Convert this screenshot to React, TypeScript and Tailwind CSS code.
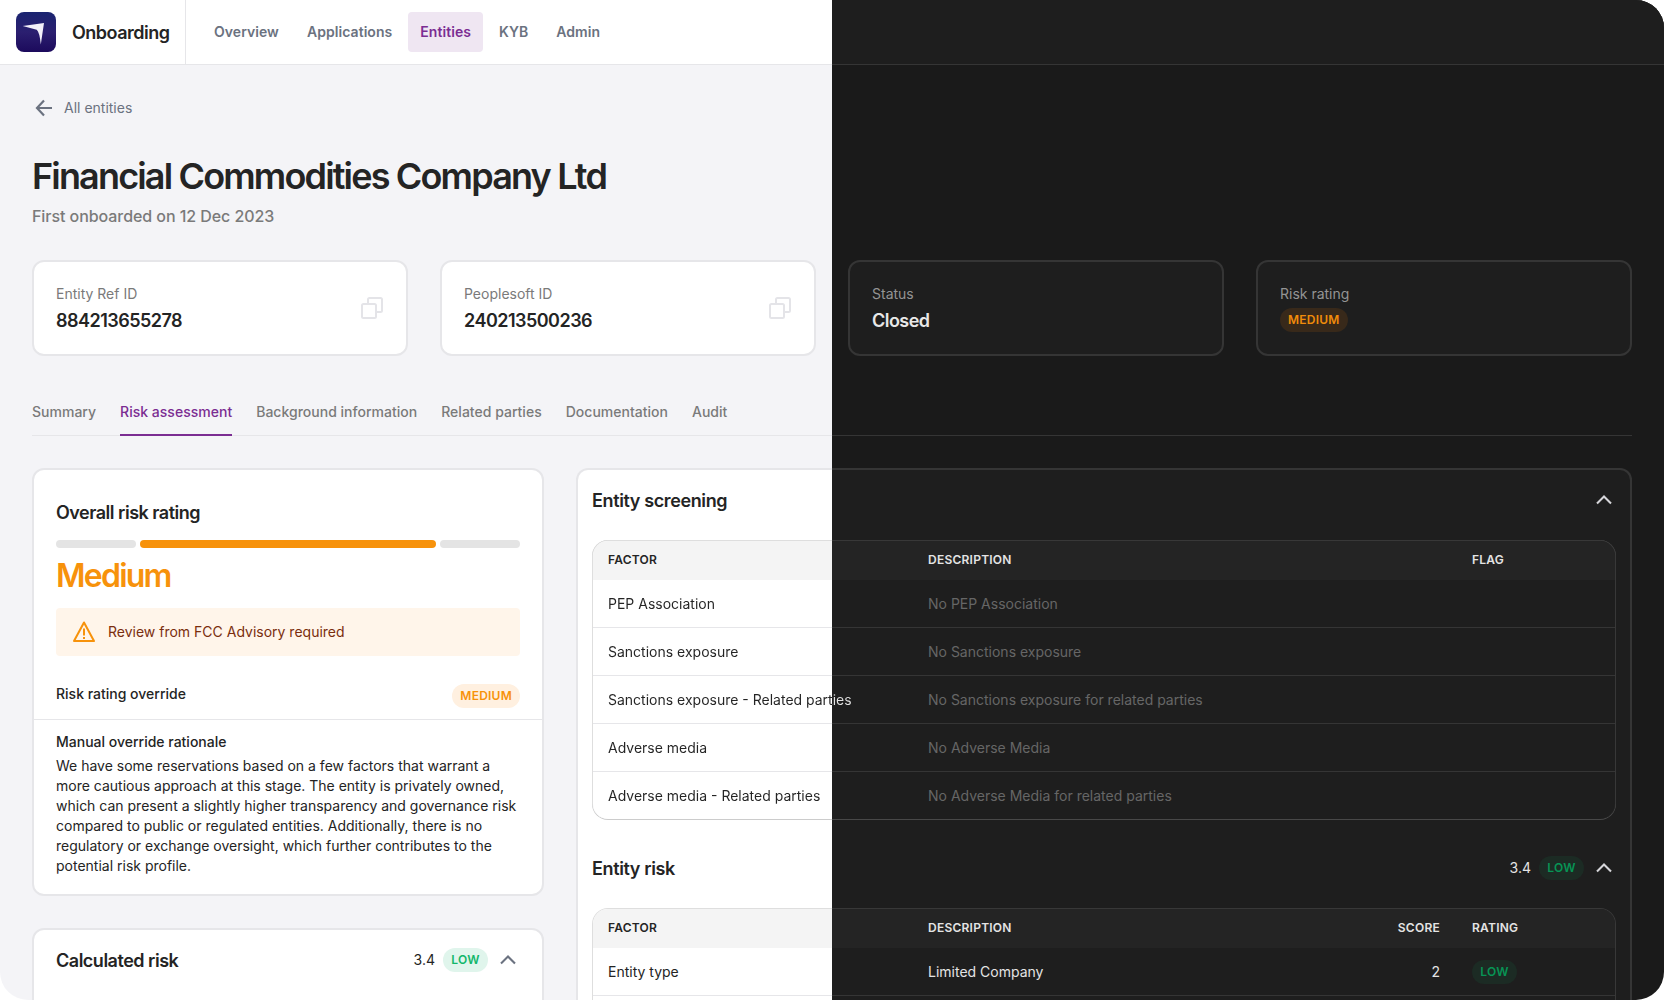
import React from 'react';
import { clsx } from 'clsx';

// The backdrop is fixed to the window, so every surface changes theme at the same x
const split = {
  page: 'bg-fixed bg-[linear-gradient(90deg,#f4f4f7_50%,#1a1a1a_50%)]',
  surface: 'bg-fixed bg-[linear-gradient(90deg,#ffffff_50%,#1e1e1e_50%)]',
  border: 'bg-fixed bg-[linear-gradient(90deg,#e6e6e9_50%,#353535_50%)]',
  tableBorder: 'bg-fixed bg-[linear-gradient(90deg,#dedede_50%,#383838_50%)]',
  tableEnd: 'bg-fixed bg-[linear-gradient(90deg,#cccccc_50%,#484848_50%)]',
  head: 'bg-fixed bg-[linear-gradient(90deg,#f4f4f4_50%,#242424_50%)]',
  text: 'bg-fixed bg-[linear-gradient(90deg,#242424_50%,#e4e4e4_50%)] bg-clip-text text-transparent',
};

const navItems = ['Overview', 'Applications', 'Entities', 'KYB', 'Admin'];
const tabs = ['Summary', 'Risk assessment', 'Background information', 'Related parties', 'Documentation', 'Audit'];

const screening = [
  { factor: 'PEP Association', desc: 'No PEP Association' },
  { factor: 'Sanctions exposure', desc: 'No Sanctions exposure' },
  { factor: 'Sanctions exposure - Related parties', desc: 'No Sanctions exposure for related parties' },
  { factor: 'Adverse media', desc: 'No Adverse Media' },
  { factor: 'Adverse media - Related parties', desc: 'No Adverse Media for related parties' },
];

const badgeTones = {
  medium: 'bg-[#fff0e0] text-[#f7920b]',
  mediumDark: 'bg-[#38291a] text-[#f08c0a]',
  low: 'bg-[#e0f5ec] text-[#12b76a]',
  lowDark: 'bg-[#1c2b24] text-[#079455]',
};

const Badge: React.FC<{ tone: keyof typeof badgeTones; children: string }> = ({ tone, children }) => (
  <span className={clsx('inline-flex h-6 min-w-[45px] items-center justify-center rounded-full px-2 text-xs font-semibold tracking-[0.02em]', badgeTones[tone])}>
    {children}
  </span>
);

const Chevron: React.FC<{ className: string }> = ({ className }) => (
  <svg width="24" height="24" viewBox="0 0 24 24" fill="none" stroke="currentColor" strokeWidth="2.100" className={className}>
    <path d="M5 15.6 12 8.6l7 7" />
  </svg>
);

const CopyIcon: React.FC = () => (
  <svg width="24" height="24" viewBox="0 0 24 24" fill="none" stroke="#e4e4e8" strokeWidth="2">
    <rect x="2" y="8" width="14" height="14" rx="1.500" />
    <path d="M8 8V3.500A1.500 1.500 0 0 1 9.500 2h11A1.500 1.500 0 0 1 22 3.500v11a1.500 1.500 0 0 1-1.500 1.500H16" />
  </svg>
);

const StatCard: React.FC<{ label: string; value?: string; dark?: boolean; copy?: boolean; children?: React.ReactNode }> = ({
  label,
  value,
  dark,
  copy,
  children,
}) => (
  <div
    className={clsx(
      'flex h-24 items-center justify-between rounded-xl border-2 px-[22px]',
      dark ? 'border-[#353535] bg-[#1e1e1e]' : 'border-[#e6e6e9] bg-white',
    )}
  >
    <div className="pt-1">
      <div className={clsx('h-5 text-sm leading-5', dark ? 'text-[#949494]' : 'text-[#7a7a7a]')}>{label}</div>
      <div className={clsx('flex h-8 items-center text-lg font-semibold tracking-[-0.029em]', dark ? 'text-[#e8e8e8]' : 'text-[#242424]')}>
        {value && <span className="pt-0.5">{value}</span>}
        {children}
      </div>
    </div>
    {copy && <CopyIcon />}
  </div>
);

const TableHead: React.FC<{ score?: boolean; last: string }> = ({ score, last }) => (
  <div className={clsx('flex h-[39px] items-center pb-0.5 pl-[15px] text-xs font-semibold tracking-[0.02em]', split.head)}>
    <span className="w-80 text-[#242424]">FACTOR</span>
    <span className="w-96 text-[#e4e4e4]">DESCRIPTION</span>
    <span className="w-32 text-right text-[#e4e4e4]">{score ? 'SCORE' : ''}</span>
    <span className="pl-8 text-[#e4e4e4]">{last}</span>
  </div>
);

const App: React.FC = () => (
  <div className="h-[1000px] w-full overflow-hidden bg-white font-['Inter',sans-serif]">
    <div className={clsx('flex h-full flex-col overflow-hidden rounded-[28px] rounded-tl-none', split.page)}>
      <header className={clsx('shrink-0 pb-px', split.border)}>
        <div className={clsx('flex h-16 items-center', split.surface)}>
          <div className="flex h-full w-[186px] items-center border-r border-[#e6e6e9] pl-4">
            <svg width="40" height="40" viewBox="0 0 40 40">
              <defs>
                <linearGradient id="logo" x1="0" y1="0" x2="0" y2="1">
                  <stop offset="0" stopColor="#1a2470" />
                  <stop offset="0.5" stopColor="#2b1f70" />
                  <stop offset="1" stopColor="#1c0a5c" />
                </linearGradient>
              </defs>
              <rect width="40" height="40" rx="8" fill="url(#logo)" />
              <path d="M6.700 14 28 11 24.800 32.500Q23.500 20 20.700 17.800Z" fill="#f3f1fa" />
            </svg>
            <span className="ml-4 pt-0.5 text-lg font-semibold tracking-[-0.028em] text-[#242424]">Onboarding</span>
          </div>
          <nav className="flex gap-1 pl-4 text-sm font-semibold tracking-[0.004em] text-[#6b7280]">
            {navItems.map((item) => (
              <a key={item} className={clsx('flex h-10 items-center rounded px-3', item === 'Entities' && 'bg-[#efe6f2] text-[#7b2d92]')}>
                {item}
              </a>
            ))}
          </nav>
        </div>
      </header>

      <main className="px-8">
        <a className="mt-[31px] flex h-6 items-center gap-2 text-sm text-[#6b7280]">
          <svg width="24" height="24" viewBox="0 0 24 24" fill="none" stroke="currentColor" strokeWidth="2.200">
            <path d="M20 12H5M12 4.500 5 12l7 7.500" />
          </svg>
          All entities
        </a>
        <h1 className="mt-8 h-12 text-4xl leading-[48px] font-semibold tracking-[-0.051em] text-[#242424]">Financial Commodities Company Ltd</h1>
        <p className="mt-1 h-6 text-base font-medium tracking-[-0.004em] text-[#7a7a7a]">First onboarded on 12 Dec 2023</p>

        <div className="mt-8 grid grid-cols-4 gap-8">
          <StatCard label="Entity Ref ID" value="884213655278" copy />
          <StatCard label="Peoplesoft ID" value="240213500236" copy />
          <StatCard label="Status" value="Closed" dark />
          <StatCard label="Risk rating" dark><Badge tone="mediumDark">MEDIUM</Badge></StatCard>
        </div>

        <div className={clsx('mt-8 pb-px', split.border)}>
          <div className={clsx('flex h-[47px] gap-6 text-sm font-medium tracking-[0.001em] text-[#7a7a7a]', split.page)}>
            {tabs.map((tab) => (
              <a key={tab} className={clsx('-mb-px flex items-center border-b-2 pt-0.5', tab === 'Risk assessment' ? 'border-[#7b2d92] text-[#7b2d92]' : 'border-transparent')}>
                {tab}
              </a>
            ))}
          </div>
        </div>

        <div className="mt-8 flex items-start gap-8">
          <div className="flex w-[512px] shrink-0 flex-col gap-8">
            <section className="h-[428px] rounded-xl border-2 border-[#e6e6e9] bg-white text-sm text-[#242424]">
              <div className="px-[22px] pt-[30px]">
                <h2 className="h-6 text-lg leading-[26px] font-semibold tracking-[-0.027em]">Overall risk rating</h2>
                <div className="mt-4 flex h-2 gap-1">
                  <span className="w-20 rounded-full bg-[#e4e4e4]" />
                  <span className="flex-1 rounded-full bg-[#f7920b]" />
                  <span className="w-20 rounded-full bg-[#e4e4e4]" />
                </div>
                <div className="mt-2 h-10 text-[32px] leading-[39px] font-semibold tracking-[-0.055em] text-[#f7920b]">Medium</div>
                <div className="mt-3 flex h-12 items-center gap-3 rounded bg-[#fff5ea] px-4 text-[#7a2e0e]">
                  <svg width="24" height="24" viewBox="0 0 24 24" fill="none" stroke="#f7920b" strokeWidth="2" strokeLinejoin="round">
                    <path d="M12 2.500 22 21H2Z" />
                    <path d="M12 8.500v7M12 17v2" />
                  </svg>
                  Review from FCC Advisory required
                </div>
                <div className="mt-7 flex h-6 items-center justify-between font-medium">
                  <span className="pb-1">Risk rating override</span>
                  <Badge tone="medium">MEDIUM</Badge>
                </div>
              </div>
              <div className="mt-[11px] border-t border-[#e6e6e9] px-[22px] pt-3">
                <h3 className="leading-5 font-medium">Manual override rationale</h3>
                <p className="mt-1 leading-5">
                  We have some reservations based on a few factors that warrant a more cautious approach at this stage. The entity is
                  privately owned, which can present a slightly higher transparency and governance risk compared to public or regulated
                  entities. Additionally, there is no regulatory or exchange oversight, which further contributes to the potential risk
                  profile.
                </p>
              </div>
            </section>

            <section className="h-28 rounded-xl border-2 border-[#e6e6e9] bg-white px-[22px] pt-[18px] text-sm text-[#242424]">
              <div className="flex h-6 items-center">
                <h2 className="flex-1 pt-0.5 text-lg font-semibold tracking-[-0.027em]">Calculated risk</h2>
                <span className="mr-2">3.4</span>
                <Badge tone="low">LOW</Badge>
                <Chevron className="ml-2 text-[#6b7280]" />
              </div>
            </section>
          </div>

          <div className={clsx('flex-1 rounded-xl p-0.5', split.border)}>
            <div className={clsx('h-[600px] rounded-[10px] px-3.5 pt-[18px]', split.surface)}>
              <div className="flex h-6 items-center justify-between">
                <h2 className="pt-0.5 text-lg font-semibold tracking-[-0.021em] text-[#242424]">Entity screening</h2>
                <Chevron className="text-[#d6d6da]" />
              </div>
              <div className={clsx('mt-7 rounded-2xl pb-px', split.tableEnd)}>
                <div className={clsx('rounded-2xl p-px pb-0', split.tableBorder)}>
                  <div className={clsx('overflow-hidden rounded-[15px]', split.surface)}>
                    <TableHead last="FLAG" />
                    {screening.map((row, i) => (
                      <div key={row.factor} className={clsx(i > 0 && 'pt-px', split.border)}>
                        <div className={clsx('flex h-[47px] items-center pl-[15px] text-sm', split.surface)}>
                          <span className="w-80"><span className={split.text}>{row.factor}</span></span>
                          <span className="text-[#666666]">{row.desc}</span>
                        </div>
                      </div>
                    ))}
                  </div>
                </div>
              </div>

              <div className="mt-9 flex h-6 items-center text-sm text-[#e4e4e4]">
                <h2 className="flex-1 pt-0.5 text-lg font-semibold tracking-[-0.021em] text-[#242424]">Entity risk</h2>
                <span className="mr-2">3.4</span>
                <Badge tone="lowDark">LOW</Badge>
                <Chevron className="ml-2 text-[#d6d6da]" />
              </div>
              <div className={clsx('mt-7 rounded-t-2xl p-px', split.tableBorder)}>
                <div className={clsx('h-28 overflow-hidden rounded-t-[15px]', split.surface)}>
                  <TableHead last="RATING" score />
                  <div className={clsx('pb-px', split.border)}>
                    <div className={clsx('flex h-[47px] items-center pl-[15px] text-sm', split.surface)}>
                      <span className="w-80 text-[#242424]">Entity type</span>
                      <span className="w-96 text-[#e4e4e4]">Limited Company</span>
                      <span className="w-32 text-right text-[#e4e4e4]">2</span>
                      <span className="pl-8"><Badge tone="lowDark">LOW</Badge></span>
                    </div>
                  </div>
                </div>
              </div>
            </div>
          </div>
        </div>
      </main>
    </div>
  </div>
);

export default App;
